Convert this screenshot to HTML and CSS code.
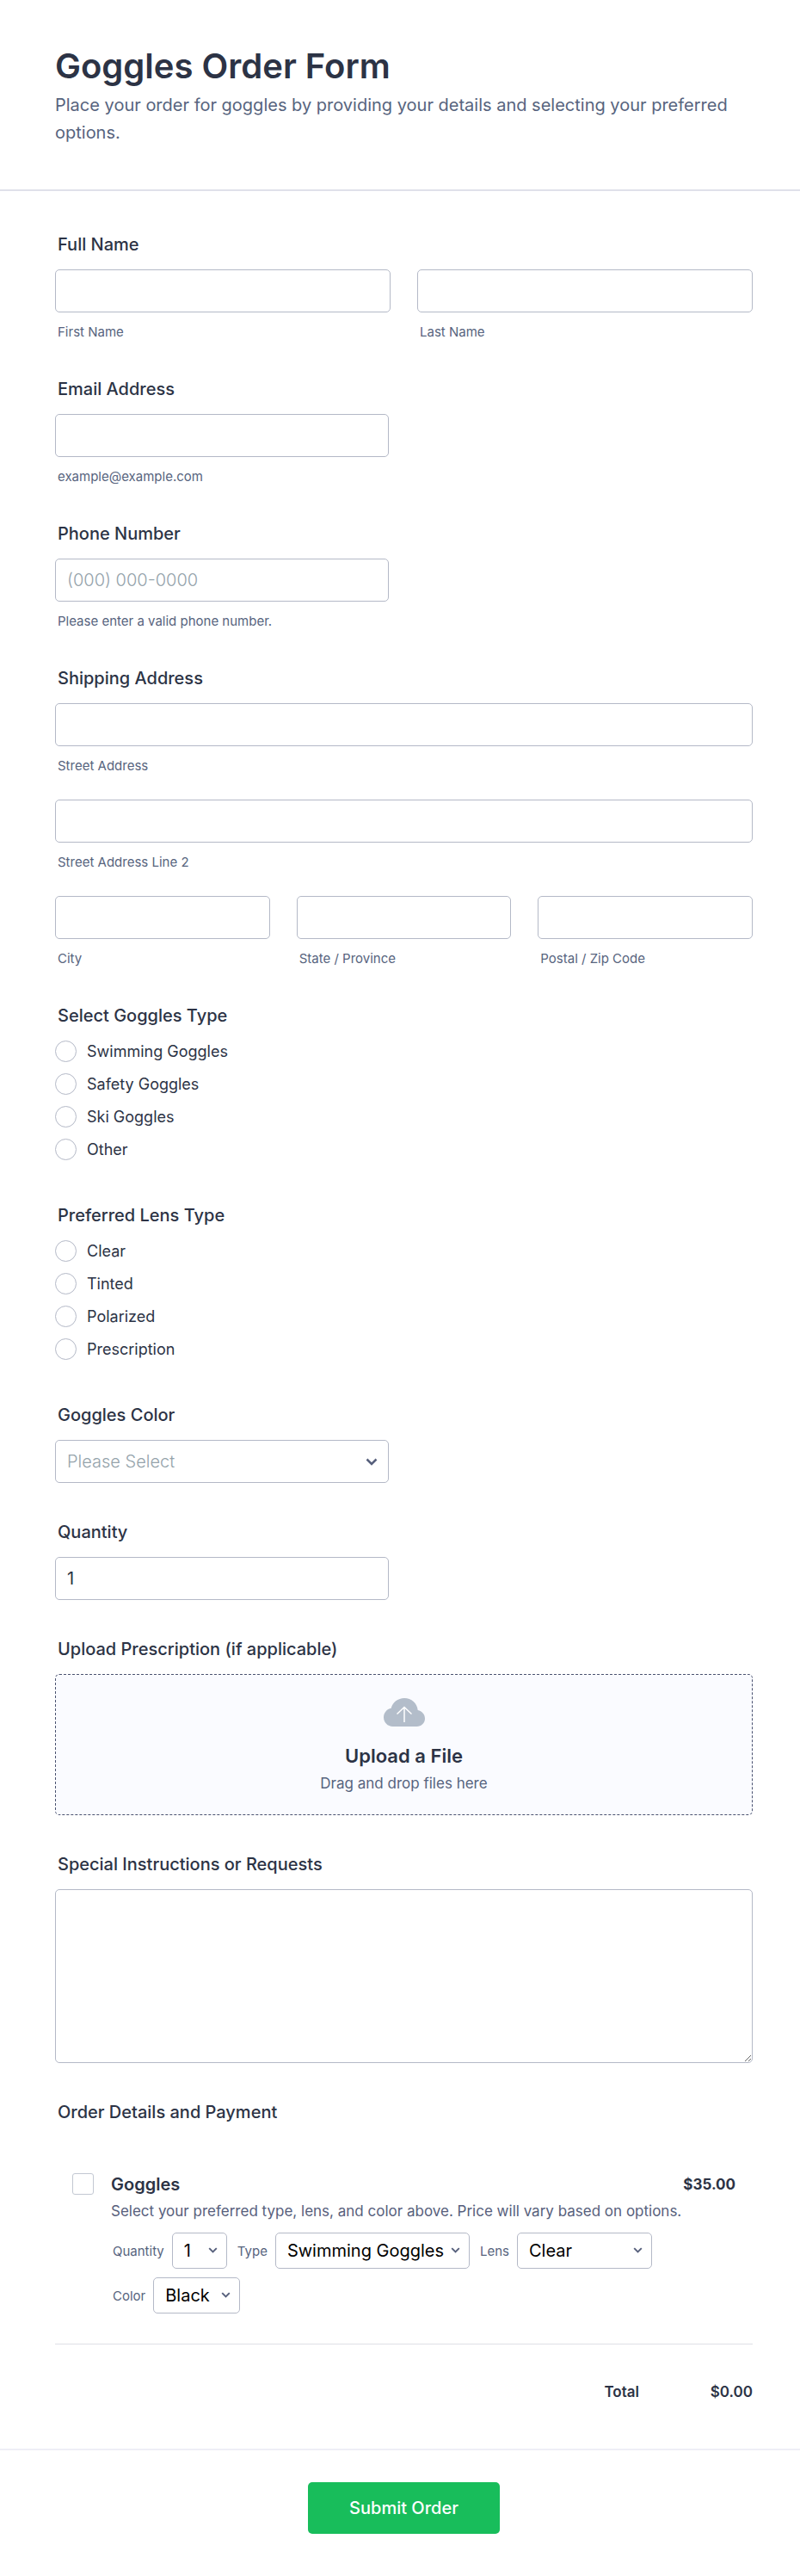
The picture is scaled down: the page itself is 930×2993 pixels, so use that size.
FILE: index.html
```html
<!DOCTYPE html>
<html lang="en">
<head>
    <meta charset="UTF-8">
    <meta name="viewport" content="width=device-width, initial-scale=1.0">
    <title>Goggles Order Form</title>
    <link rel="stylesheet" href="styles.css">
</head>
<body>
    <form class="order-form">
        <header class="form-header">
            <h1>Goggles Order Form</h1>
            <p>Place your order for goggles by providing your details and selecting your preferred options.</p>
        </header>

        <div class="form-body">
            <fieldset class="question">
                <legend class="question-label">Full Name</legend>
                <div class="field-row">
                    <div class="field">
                        <input class="text-input" type="text" id="first-name">
                        <label class="sub-label" for="first-name">First Name</label>
                    </div>
                    <div class="field">
                        <input class="text-input" type="text" id="last-name">
                        <label class="sub-label" for="last-name">Last Name</label>
                    </div>
                </div>
            </fieldset>

            <div class="question">
                <label class="question-label" for="email">Email Address</label>
                <div class="field half">
                    <input class="text-input" type="email" id="email">
                    <label class="sub-label" for="email">example@example.com</label>
                </div>
            </div>

            <div class="question">
                <label class="question-label" for="phone">Phone Number</label>
                <div class="field half">
                    <input class="text-input" type="tel" id="phone" placeholder="(000) 000-0000">
                    <label class="sub-label" for="phone">Please enter a valid phone number.</label>
                </div>
            </div>

            <fieldset class="question">
                <legend class="question-label">Shipping Address</legend>
                <div class="field-stack">
                    <div class="field">
                        <input class="text-input" type="text" id="street">
                        <label class="sub-label" for="street">Street Address</label>
                    </div>
                    <div class="field">
                        <input class="text-input" type="text" id="street2">
                        <label class="sub-label" for="street2">Street Address Line 2</label>
                    </div>
                    <div class="field-row">
                        <div class="field">
                            <input class="text-input" type="text" id="city">
                            <label class="sub-label" for="city">City</label>
                        </div>
                        <div class="field">
                            <input class="text-input" type="text" id="state">
                            <label class="sub-label" for="state">State / Province</label>
                        </div>
                        <div class="field">
                            <input class="text-input" type="text" id="zip">
                            <label class="sub-label" for="zip">Postal / Zip Code</label>
                        </div>
                    </div>
                </div>
            </fieldset>

            <fieldset class="question choices">
                <legend class="question-label">Select Goggles Type</legend>
                <div class="choice-list">
                    <label class="choice"><input type="radio" name="type" value="swimming">Swimming Goggles</label>
                    <label class="choice"><input type="radio" name="type" value="safety">Safety Goggles</label>
                    <label class="choice"><input type="radio" name="type" value="ski">Ski Goggles</label>
                    <label class="choice"><input type="radio" name="type" value="other">Other</label>
                </div>
            </fieldset>

            <fieldset class="question choices">
                <legend class="question-label">Preferred Lens Type</legend>
                <div class="choice-list">
                    <label class="choice"><input type="radio" name="lens" value="clear">Clear</label>
                    <label class="choice"><input type="radio" name="lens" value="tinted">Tinted</label>
                    <label class="choice"><input type="radio" name="lens" value="polarized">Polarized</label>
                    <label class="choice"><input type="radio" name="lens" value="prescription">Prescription</label>
                </div>
            </fieldset>

            <div class="question">
                <label class="question-label" for="color">Goggles Color</label>
                <div class="select-wrap half">
                    <select class="text-input placeholder" id="color">
                        <option>Please Select</option>
                        <option>Black</option>
                        <option>Blue</option>
                        <option>White</option>
                    </select>
                    <svg class="chevron" viewBox="0 0 14 9"><path d="M1.5 1.5 7 7l5.5-5.5"/></svg>
                </div>
            </div>

            <div class="question">
                <label class="question-label" for="quantity">Quantity</label>
                <div class="half">
                    <input class="text-input" type="number" id="quantity" value="1">
                </div>
            </div>

            <div class="question">
                <label class="question-label" for="prescription-file">Upload Prescription (if applicable)</label>
                <label class="upload-box">
                    <input type="file" id="prescription-file">
                    <svg class="upload-icon" viewBox="0 0 48 33">
                        <path class="cloud" d="M24 0c8.300 0 15 6 15.700 14C44.500 15 48 19 48 23.700 48 28.900 43.800 33 38.500 33H10.500C4.700 33 0 28.300 0 22.300c0-5.300 3.700-9.700 8.700-10.600C10.500 5 16.500 0 24 0z"/>
                        <path class="arrow" d="M24 28V10.500M15.500 18.500l8.500-8 8.500 8"/>
                    </svg>
                    <span class="upload-title">Upload a File</span>
                    <span class="upload-hint">Drag and drop files here</span>
                </label>
            </div>

            <div class="question">
                <label class="question-label" for="instructions">Special Instructions or Requests</label>
                <textarea class="text-area" id="instructions"></textarea>
            </div>

            <fieldset class="question">
                <legend class="question-label">Order Details and Payment</legend>
                <div class="product">
                    <input class="product-check" type="checkbox" id="product">
                    <div class="product-info">
                        <div class="product-head">
                            <label class="product-name" for="product">Goggles</label>
                            <span class="price">$35.00</span>
                        </div>
                        <p class="product-desc">Select your preferred type, lens, and color above. Price will vary based on options.</p>
                        <div class="options">
                            <div class="option">
                                <label for="opt-quantity">Quantity</label>
                                <div class="select-wrap">
                                    <select class="small-select" id="opt-quantity">
                                        <option>1</option>
                                        <option>2</option>
                                        <option>10</option>
                                    </select>
                                    <svg class="chevron" viewBox="0 0 14 9"><path d="M1.5 1.5 7 7l5.5-5.5"/></svg>
                                </div>
                            </div>
                            <div class="option">
                                <label for="opt-type">Type</label>
                                <div class="select-wrap">
                                    <select class="small-select" id="opt-type">
                                        <option>Swimming Goggles</option>
                                        <option>Safety Goggles</option>
                                        <option>Ski Goggles</option>
                                    </select>
                                    <svg class="chevron" viewBox="0 0 14 9"><path d="M1.5 1.5 7 7l5.5-5.5"/></svg>
                                </div>
                            </div>
                            <div class="option">
                                <label for="opt-lens">Lens</label>
                                <div class="select-wrap">
                                    <select class="small-select" id="opt-lens">
                                        <option>Clear</option>
                                        <option>Tinted</option>
                                        <option>Polarized</option>
                                        <option>Prescription</option>
                                    </select>
                                    <svg class="chevron" viewBox="0 0 14 9"><path d="M1.5 1.5 7 7l5.5-5.5"/></svg>
                                </div>
                            </div>
                            <div class="option">
                                <label for="opt-color">Color</label>
                                <div class="select-wrap">
                                    <select class="small-select" id="opt-color">
                                        <option>Black</option>
                                        <option>Blue</option>
                                        <option>White</option>
                                        <option>Green</option>
                                    </select>
                                    <svg class="chevron" viewBox="0 0 14 9"><path d="M1.5 1.5 7 7l5.5-5.5"/></svg>
                                </div>
                            </div>
                        </div>
                    </div>
                </div>
                <div class="total">
                    <span>Total</span>
                    <span class="total-amount">$0.00</span>
                </div>
            </fieldset>
        </div>

        <footer class="form-footer">
            <button type="submit" class="submit-button">Submit Order</button>
        </footer>
    </form>
</body>
</html>
```
FILE: styles.css
```css
* {
    box-sizing: border-box;
}
body {
    margin: 0;
    background-color: #fff;
    color: #2c3345;
    font-family: Inter, 'Liberation Sans', sans-serif;
    font-size: 18px;
}
input, select, textarea, button {
    font-family: inherit;
}
.form-header {
    padding: 52px 64px 50px;
    border-bottom: 2px solid #e0e1ea;
}
.form-header h1 {
    margin: 0 0 4px;
    font-size: 40px;
    font-weight: 600;
    line-height: 50px;
}
.form-header p {
    margin: 0;
    font-size: 20px;
    line-height: 32px;
    color: #57647e;
}
.form-body {
    padding: 50px 55px 55px 64px;
}
.question {
    margin: 0 0 45px;
    padding: 0;
    border: 0;
    min-width: 0;
}
.question:last-child {
    margin-bottom: 0;
}
.question-label {
    display: block;
    padding: 0 3px;
    margin-bottom: 17px;
    font-size: 20px;
    font-weight: 500;
    line-height: 24px;
}
.field-row {
    display: flex;
    gap: 31px;
}
.field {
    flex: 1;
    min-width: 0;
}
.field-stack {
    display: flex;
    flex-direction: column;
    gap: 30px;
}
.half {
    width: 388px;
    max-width: 100%;
}
.text-input {
    display: block;
    width: 100%;
    height: 50px;
    padding: 0 13px;
    border: 1px solid #b4b9c7;
    border-radius: 5px;
    background-color: #fff;
    color: #2c3345;
    font-size: 20px;
    appearance: none;
}
.text-input::placeholder,
.text-input.placeholder {
    color: #95a3ab;
    font-weight: 300;
    opacity: 1;
}
.sub-label {
    display: block;
    padding: 0 3px;
    margin-top: 14px;
    font-size: 15px;
    line-height: 18px;
    color: #57647e;
}
.choices {
    margin-bottom: 52px;
}
.choice-list {
    display: flex;
    flex-direction: column;
    gap: 13px;
}
.choice {
    display: flex;
    align-items: center;
    gap: 12px;
    line-height: 25px;
}
.choice input {
    width: 25px;
    height: 25px;
    margin: 0;
    border: 1px solid #b4b9c7;
    border-radius: 50%;
    background-color: #fff;
    appearance: none;
}
.choice input:checked {
    border: 7px solid #2e69ff;
}
.select-wrap {
    position: relative;
}
.chevron {
    position: absolute;
    right: 13px;
    top: 50%;
    width: 14px;
    height: 9px;
    margin-top: -4px;
    fill: none;
    stroke: #57607c;
    stroke-width: 2.5;
    pointer-events: none;
}
.upload-box {
    display: flex;
    flex-direction: column;
    align-items: center;
    padding: 27px 20px 24px;
    border: 1px dashed #4a5270;
    border-radius: 5px;
    background-color: #fafbff;
    text-align: center;
    cursor: pointer;
}
.upload-box input {
    position: absolute;
    opacity: 0;
    pointer-events: none;
}
.upload-icon {
    width: 48px;
    height: 33px;
}
.upload-icon .cloud {
    fill: #b3bdca;
}
.upload-icon .arrow {
    fill: none;
    stroke: #fff;
    stroke-width: 1.5;
}
.upload-title {
    margin-top: 20px;
    font-size: 22px;
    font-weight: 600;
    line-height: 28px;
}
.upload-hint {
    margin-top: 6px;
    font-size: 17px;
    line-height: 24px;
    color: #57647e;
}
.text-area {
    display: block;
    width: 100%;
    height: 202px;
    padding: 12px 13px;
    border: 1px solid #b4b9c7;
    border-radius: 5px;
    background-color: #fff;
    color: #2c3345;
    font-size: 20px;
}
.product {
    display: flex;
    gap: 20px;
    padding: 42px 20px 35px;
    border-bottom: 1px solid #dfe0e6;
}
.product-check {
    flex: none;
    width: 25px;
    height: 25px;
    margin: 0;
    border: 1px solid #c3c8d2;
    border-radius: 3px;
    background-color: #fff;
    appearance: none;
}
.product-check:checked {
    background-color: #2e69ff;
}
.product-info {
    flex: 1;
    min-width: 0;
}
.product-head {
    display: flex;
    justify-content: space-between;
    line-height: 26px;
}
.product-name {
    font-size: 20px;
    font-weight: 600;
}
.price {
    font-size: 17px;
    font-weight: 700;
}
.product-desc {
    margin: 6px 0 12px;
    font-size: 17px;
    line-height: 25px;
    color: #57607c;
}
.options {
    display: flex;
    flex-wrap: wrap;
    gap: 10px 12px;
    padding-left: 2px;
}
.option {
    display: flex;
    align-items: center;
    gap: 9px;
    font-size: 15px;
    color: #57647e;
}
.small-select {
    display: block;
    height: 42px;
    padding: 0 28px 0 13px;
    border: 1px solid #b4b9c7;
    border-radius: 5px;
    background-color: #fff;
    color: #000;
    font-size: 20px;
    appearance: none;
}
.option .chevron {
    right: 11px;
    width: 11px;
    height: 7px;
}
.total {
    display: flex;
    justify-content: flex-end;
    padding-top: 44px;
    font-size: 17px;
    font-weight: 600;
    line-height: 22px;
}
.total-amount {
    min-width: 132px;
    text-align: right;
}
.form-footer {
    display: flex;
    justify-content: center;
    padding: 37px 55px 49px 64px;
    border-top: 2px solid #eeeef6;
}
.submit-button {
    min-width: 223px;
    height: 60px;
    padding: 0 20px;
    border: 0;
    border-radius: 5px;
    background-color: #18bd5b;
    color: #fff;
    font-size: 20px;
    font-weight: 500;
    cursor: pointer;
}
```
